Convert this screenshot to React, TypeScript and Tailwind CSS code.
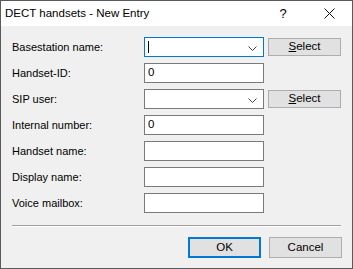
import React from "react";

const font = { fontFamily: '"Segoe UI", "Liberation Sans", Arial, sans-serif' };

function Chevron() {
  return (
    <svg width="9" height="6" viewBox="0 0 9 6" className="absolute right-[6px] top-[8px]">
      <path d="M0.5 0.5 L4.5 4.5 L8.5 0.5" fill="none" stroke="#444" strokeWidth="1" />
    </svg>
  );
}

function Combo({ focused }: { focused?: boolean }) {
  return (
    <div
      className={
        "relative w-[120px] h-[20px] bg-white border " +
        (focused ? "border-[#0078d7]" : "border-[#7a7a7a]")
      }
    >
      {focused && <div className="absolute left-[3px] top-[3px] w-px h-[12px] bg-black" />}
      <Chevron />
    </div>
  );
}

function TextBox({ value }: { value?: string }) {
  return (
    <div className="w-[120px] h-[20px] bg-white border border-[#7a7a7a] flex items-center pl-[3px] text-[11.5px] leading-none text-black">
      {value}
    </div>
  );
}

function SelectBtn() {
  return (
    <div className="w-[73px] h-[18px] bg-[#e1e1e1] border border-[#adadad] flex items-center justify-center text-[11.5px] leading-none text-black">
      <span>
        <span className="underline">S</span>elect
      </span>
    </div>
  );
}

const rows: { label: string; kind: "combo" | "text"; value?: string; focused?: boolean }[] = [
  { label: "Basestation name:", kind: "combo", focused: true },
  { label: "Handset-ID:", kind: "text", value: "0" },
  { label: "SIP user:", kind: "combo" },
  { label: "Internal number:", kind: "text", value: "0" },
  { label: "Handset name:", kind: "text" },
  { label: "Display name:", kind: "text" },
  { label: "Voice mailbox:", kind: "text" },
];

export default function App() {
  return (
    <div
      className="w-[353px] h-[269px] border border-[#5a5a5a] bg-[#f0f0f0] flex flex-col text-black"
      style={font}
    >
      <div className="h-[25px] bg-white flex items-center shrink-0">
        <span className="pl-[4px] text-[11.5px] leading-none">DECT handsets - New Entry</span>
        <span className="ml-auto w-[46px] text-center text-[13px] leading-none">?</span>
        <span className="w-[46px] flex justify-center">
          <svg width="11" height="11" viewBox="0 0 11 11">
            <path d="M0.5 0.5 L10.5 10.5 M10.5 0.5 L0.5 10.5" stroke="#111" strokeWidth="1" />
          </svg>
        </span>
      </div>
      <div className="flex flex-col gap-[6px] pt-[11px] pl-[11px]">
        {rows.map((r) => (
          <div key={r.label} className="flex items-center h-[20px]">
            <div className="w-[132px] text-[11px] leading-none">{r.label}</div>
            {r.kind === "combo" ? <Combo focused={r.focused} /> : <TextBox value={r.value} />}
            {r.kind === "combo" && (
              <div className="ml-[4px]">
                <SelectBtn />
              </div>
            )}
          </div>
        ))}
      </div>
      <div className="mt-[12px] ml-[11px] w-[329px] h-[2px] border-t border-[#a0a0a0] border-b border-b-white" />
      <div className="flex justify-end gap-[8px] pr-[10px] mt-[10px]">
        <div className="w-[73px] h-[21px] bg-[#e1e1e1] border-2 border-[#0078d7] flex items-center justify-center text-[11.5px] leading-none">
          OK
        </div>
        <div className="w-[73px] h-[21px] bg-[#e1e1e1] border border-[#adadad] flex items-center justify-center text-[11.5px] leading-none">
          Cancel
        </div>
      </div>
    </div>
  );
}
